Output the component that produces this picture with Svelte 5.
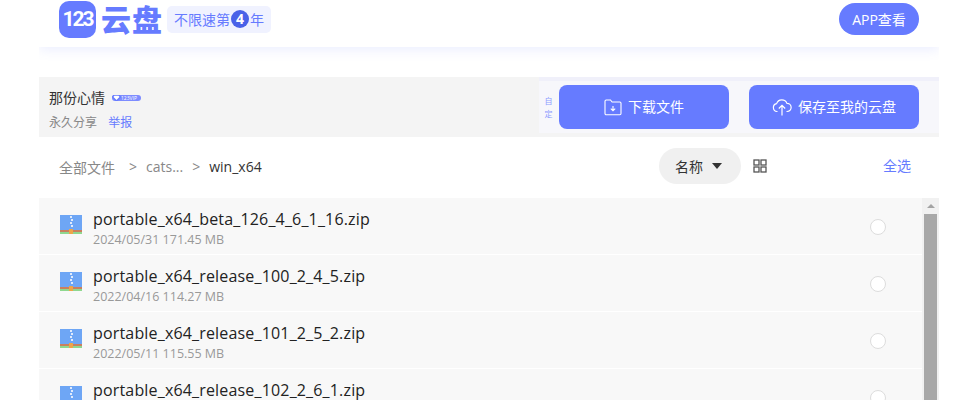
<script>
  const files = [
    { name: 'portable_x64_beta_126_4_6_1_16.zip', meta: '2024/05/31 171.45 MB' },
    { name: 'portable_x64_release_100_2_4_5.zip', meta: '2022/04/16 114.27 MB' },
    { name: 'portable_x64_release_101_2_5_2.zip', meta: '2022/05/11 115.55 MB' },
    { name: 'portable_x64_release_102_2_6_1.zip', meta: '2022/06/02 116.08 MB' }
  ];
</script>

<div class="page">
  <header class="top">
    <div class="brand">
      <span class="logo-mark">123</span>
      <span class="logo-name">云盘</span>
      <span class="slogan">不限速第<b>4</b>年</span>
    </div>
    <button class="app-btn">APP查看</button>
  </header>

  <section class="share">
    <div class="owner">
      <div class="owner-name">
        那份心情
        <span class="vip">
          <svg width="9" height="6" viewBox="0 0 8 6"><path d="M1.5 0h5L8 2 4 6 0 2z" fill="#fff" stroke="#667bff" stroke-width="1.500" /></svg>
          <span>123VIP</span>
        </span>
      </div>
      <div class="owner-sub">永久分享 <a href="#report">举报</a></div>
    </div>
    <div class="actions">
      <span class="custom">自定</span>
      <button class="action">
        <svg width="18" height="18" viewBox="0 0 18 18" fill="none" stroke="#fff" stroke-width="1.1">
          <path d="M1 3.2a1.2 1.2 0 0 1 1.2-1.2h4.3l1.6 2h7.7a1.2 1.2 0 0 1 1.2 1.2v10.4a1.2 1.2 0 0 1-1.2 1.2H2.2A1.2 1.2 0 0 1 1 15.6z" />
          <path d="M9 8v4.600M6.800 10.600 9 12.800l2.200-2.200" />
        </svg>
        <span class="label">下载文件</span>
      </button>
      <button class="action">
        <svg width="20" height="18" viewBox="0 0 20 18" fill="none" stroke="#fff" stroke-width="1.2">
          <path d="M5.5 13.5H5A4 4 0 0 1 4.6 5.6 5.5 5.5 0 0 1 15 5.4a4 4 0 0 1 .2 8.1h-.7" />
          <path d="M10 17.500V7.500M6.800 10.500 10 7.300l3.200 3.200" />
        </svg>
        <span class="label">保存至我的云盘</span>
      </button>
    </div>
  </section>

  <section class="toolbar">
    <nav class="crumbs">
      <span>全部文件</span>
      <span class="sep">&gt;</span>
      <span>cats...</span>
      <span class="sep second">&gt;</span>
      <span class="current">win_x64</span>
    </nav>
    <div class="tools">
      <button class="sort">名称 <i class="caret"></i></button>
      <svg class="grid" width="14" height="14" viewBox="0 0 14 14" fill="none" stroke="#555" stroke-width="1.3">
        <rect x="1" y="1" width="5" height="5" />
        <rect x="8" y="1" width="5" height="5" />
        <rect x="1" y="8" width="5" height="5" />
        <rect x="8" y="8" width="5" height="5" />
      </svg>
      <a class="select-all" href="#all">全选</a>
    </div>
  </section>

  <section class="list">
    <ul class="rows">
      {#each files as file}
        <li class="row">
          <svg class="zip" width="22" height="19" viewBox="0 0 22 19">
            <rect width="22" height="15" fill="#6ea6f5" />
            <rect width="22" height="2" y="15" fill="#c9805f" />
            <rect width="22" height="2" y="17" fill="#8fd88f" />
            <rect x="9" y="14" width="4" height="5" fill="#eda54a" />
            <path d="M10 1h2v2h-2zM11 4h2v2h-2zM10 7h2v2h-2zM11 10h2v2h-2z" fill="#dfeafc" />
          </svg>
          <div class="info">
            <div class="name">{file.name}</div>
            <div class="meta">{file.meta}</div>
          </div>
          <span class="radio"></span>
        </li>
      {/each}
    </ul>
    <div class="scrollbar">
      <i class="arrow"></i>
      <div class="thumb"></div>
    </div>
  </section>
</div>

<style>
  :global(body) {
    margin: 0;
    background: #fff;
    overflow: hidden;
  }

  .page {
    width: 900px;
    height: 400px;
    margin-left: 39px;
    overflow: hidden;
    font-family: "Open Sans", "Noto Sans CJK SC", sans-serif;
    color: #333;
  }

  button {
    border: 0;
    font-family: inherit;
    padding: 0;
  }

  a {
    text-decoration: none;
  }

  .top {
    height: 47px;
    display: flex;
    align-items: center;
    justify-content: space-between;
    padding: 0 20px;
    box-sizing: border-box;
    background: #fff;
    box-shadow: 0 2px 12px rgba(100, 120, 255, 0.14);
  }

  .brand {
    display: flex;
    align-items: center;
    margin-top: -9px;
  }

  .logo-mark {
    width: 37px;
    height: 37px;
    border-radius: 10px;
    background: #667bff;
    color: #fff;
    font-size: 21px;
    font-weight: 700;
    line-height: 37px;
    text-align: center;
    letter-spacing: -2px;
    font-family: "Roboto", sans-serif;
  }

  .logo-name {
    margin-left: 5px;
    color: #667bff;
    font-size: 30px;
    font-weight: 900;
    line-height: 37px;
    letter-spacing: 1px;
  }

  .slogan {
    margin-left: 4px;
    height: 27px;
    padding: 0 7px;
    display: flex;
    align-items: center;
    border-radius: 5px;
    background: #f0f2ff;
    color: #667bff;
    font-size: 14px;
  }

  .slogan b {
    width: 18px;
    height: 18px;
    margin: 0 1px;
    border-radius: 50%;
    background: #4a62e8;
    color: #fff;
    font-size: 14px;
    line-height: 18px;
    text-align: center;
  }

  .app-btn {
    width: 80px;
    height: 32px;
    margin-top: -9px;
    border-radius: 16px;
    background: #667bff;
    color: #fff;
    font-size: 14px;
  }

  .share {
    height: 60px;
    margin-top: 30px;
    display: flex;
    justify-content: space-between;
    background: #f4f4f4;
  }

  .owner {
    padding: 12px 0 0 10px;
  }

  .owner-name {
    display: flex;
    align-items: center;
    font-size: 14px;
    line-height: 18px;
    color: #333;
  }

  .vip {
    display: inline-flex;
    align-items: center;
    width: 29px;
    height: 6px;
    margin-left: 7px;
    border-radius: 3px;
    background: #7d8cff;
    color: #fff;
    font-size: 5px;
    line-height: 6px;
    white-space: nowrap;
  }

  .owner-sub {
    margin-top: 7px;
    font-size: 12px;
    line-height: 17px;
    color: #888;
  }

  .owner-sub a {
    margin-left: 8px;
    color: #667bff;
  }

  .actions {
    width: 400px;
    height: 52px;
    margin-top: 4px;
    padding: 4px 20px 0 0;
    box-sizing: border-box;
    display: flex;
    align-items: flex-start;
    background: #f7f7fb;
    box-shadow: 0 -4px 0 #f0f0fa;
  }

  .custom {
    width: 9px;
    margin: 9px 6px 0 5px;
    font-size: 8px;
    line-height: 13px;
    color: #8d9bff;
    text-align: center;
  }

  .action {
    width: 170px;
    height: 44px;
    border-radius: 8px;
    background: #667bff;
    color: #fff;
    font-size: 14px;
    display: flex;
    align-items: center;
    justify-content: center;
    gap: 6px;
  }

  .label {
    margin-top: -2px;
  }

  .action + .action {
    margin-left: 20px;
  }

  .toolbar {
    height: 61px;
    display: flex;
    align-items: center;
    justify-content: space-between;
    padding: 0 28px 3px 20px;
    box-sizing: border-box;
  }

  .crumbs {
    display: flex;
    font-size: 14px;
    color: #888;
    margin-top: 2px;
  }

  .sep {
    margin: 0 9px 0 14px;
  }

  .second {
    margin: 0 9px 0 9px;
  }

  .current {
    color: #333;
  }

  .tools {
    display: flex;
    align-items: center;
  }

  .sort {
    width: 82px;
    height: 36px;
    border-radius: 18px;
    background: #f0f0f0;
    color: #333;
    font-size: 14px;
    display: flex;
    align-items: center;
    justify-content: center;
    gap: 9px;
    padding-right: 3px;
    box-sizing: border-box;
  }

  .caret {
    width: 0;
    height: 0;
    border-left: 5px solid transparent;
    border-right: 5px solid transparent;
    border-top: 6px solid #333;
  }

  .grid {
    margin-left: 12px;
  }

  .select-all {
    margin: -2px 0 0 116px;
    font-size: 14px;
    color: #667bff;
  }

  .list {
    display: flex;
  }

  .rows {
    flex: 1;
    margin: 0;
    padding: 0;
    list-style: none;
  }

  .row {
    height: 56px;
    margin-bottom: 1px;
    display: flex;
    align-items: center;
    padding: 0 36px 0 21px;
    background: #f8f8f8;
  }

  .zip {
    margin-top: -4px;
  }

  .info {
    flex: 1;
    margin: 4px 0 0 11px;
  }

  .name {
    font-size: 16px;
    line-height: 22px;
    letter-spacing: 0.17px;
    color: #222;
    margin-bottom: 2px;
  }

  .meta {
    font-size: 12.5px;
    line-height: 16px;
    color: #999;
  }

  .radio {
    width: 14px;
    height: 14px;
    border: 1px solid #ddd;
    border-radius: 50%;
    background: #fff;
    margin-top: 2px;
  }

  .scrollbar {
    width: 17px;
    background: #f1f1f1;
    display: flex;
    flex-direction: column;
    align-items: center;
  }

  .arrow {
    margin: 6px 0 6px;
    width: 0;
    height: 0;
    border-left: 4px solid transparent;
    border-right: 4px solid transparent;
    border-bottom: 4px solid #a3a3a3;
  }

  .thumb {
    width: 13px;
    flex: 1;
    background: #a8a8a8;
  }
</style>
